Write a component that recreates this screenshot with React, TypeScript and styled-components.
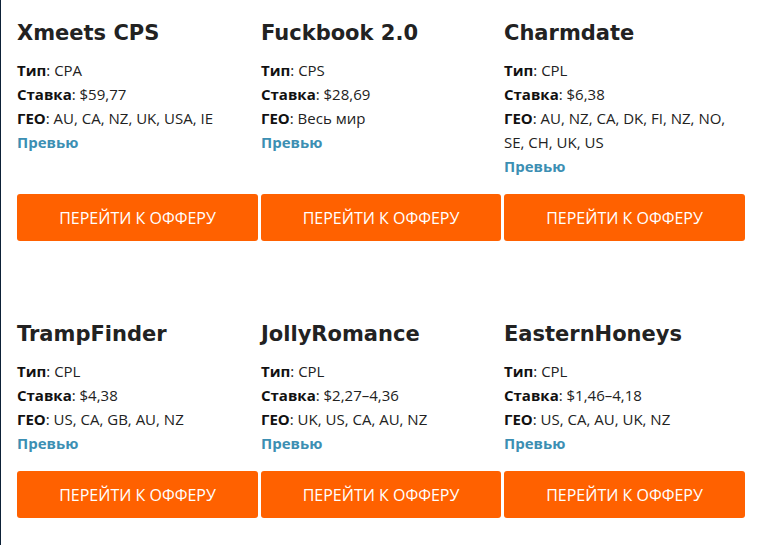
import React from "react";
import styled, { createGlobalStyle } from "styled-components";

const offers = [
  { name: "Xmeets CPS", type: "CPA", rate: "$59,77", geo: "AU, CA, NZ, UK, USA, IE" },
  { name: "Fuckbook 2.0", type: "CPS", rate: "$28,69", geo: "Весь мир" },
  { name: "Charmdate", type: "CPL", rate: "$6,38", geo: "AU, NZ, CA, DK, FI, NZ, NO, SE, CH, UK, US" },
  { name: "TrampFinder", type: "CPL", rate: "$4,38", geo: "US, CA, GB, AU, NZ" },
  { name: "JollyRomance", type: "CPL", rate: "$2,27–4,36", geo: "UK, US, CA, AU, NZ" },
  { name: "EasternHoneys", type: "CPL", rate: "$1,46–4,18", geo: "US, CA, AU, UK, NZ" },
];

const GlobalStyle = createGlobalStyle`
  html, body {
    margin: 0;
    background: #fff;
  }
  body {
    font-family: "Open Sans", "Liberation Sans", sans-serif;
  }
`;

const Page = styled.div`
  min-height: 545px;
  box-sizing: border-box;
  border-left: 1px solid #0d2137;
  padding: 20px 0 0 16px;
`;

const Grid = styled.div`
  display: grid;
  grid-template-columns: 241px 240px 241px;
  column-gap: 3px;
  row-gap: 80px;
`;

const Card = styled.div`
  display: flex;
  flex-direction: column;
`;

const Title = styled.h3`
  margin: 0 0 12px;
  font-family: "DejaVu Sans", Verdana, sans-serif;
  font-size: 21px;
  line-height: 26px;
  font-weight: 700;
  color: #222;
`;

const Line = styled.div`
  font-size: 15px;
  line-height: 24px;
  color: #222;
  padding-right: 8px;

  b {
    color: #111;
    font-weight: 700;
  }
`;

const Preview = styled.a`
  font-size: 15px;
  line-height: 24px;
  font-weight: 700;
  color: #3c8fb3;
  text-decoration: none;
`;

const Button = styled.a`
  margin-top: auto;
  display: flex;
  align-items: center;
  justify-content: center;
  height: 47px;
  border-radius: 3px;
  background: #ff6100;
  color: #fff;
  font-size: 16px;
  text-transform: uppercase;
  text-decoration: none;
`;

const Spacer = styled.div`
  height: 16px;
  flex-shrink: 0;
`;

export default function App() {
  return (
    <>
      <GlobalStyle />
      <Page>
        <Grid>
          {offers.map((o) => (
            <Card key={o.name}>
              <Title>{o.name}</Title>
              <Line>
                <b>Тип</b>: {o.type}
              </Line>
              <Line>
                <b>Ставка</b>: {o.rate}
              </Line>
              <Line>
                <b>ГЕО</b>: {o.geo}
              </Line>
              <Preview href="#">Превью</Preview>
              <Spacer />
              <Button href="#">Перейти к офферу</Button>
            </Card>
          ))}
        </Grid>
      </Page>
    </>
  );
}
